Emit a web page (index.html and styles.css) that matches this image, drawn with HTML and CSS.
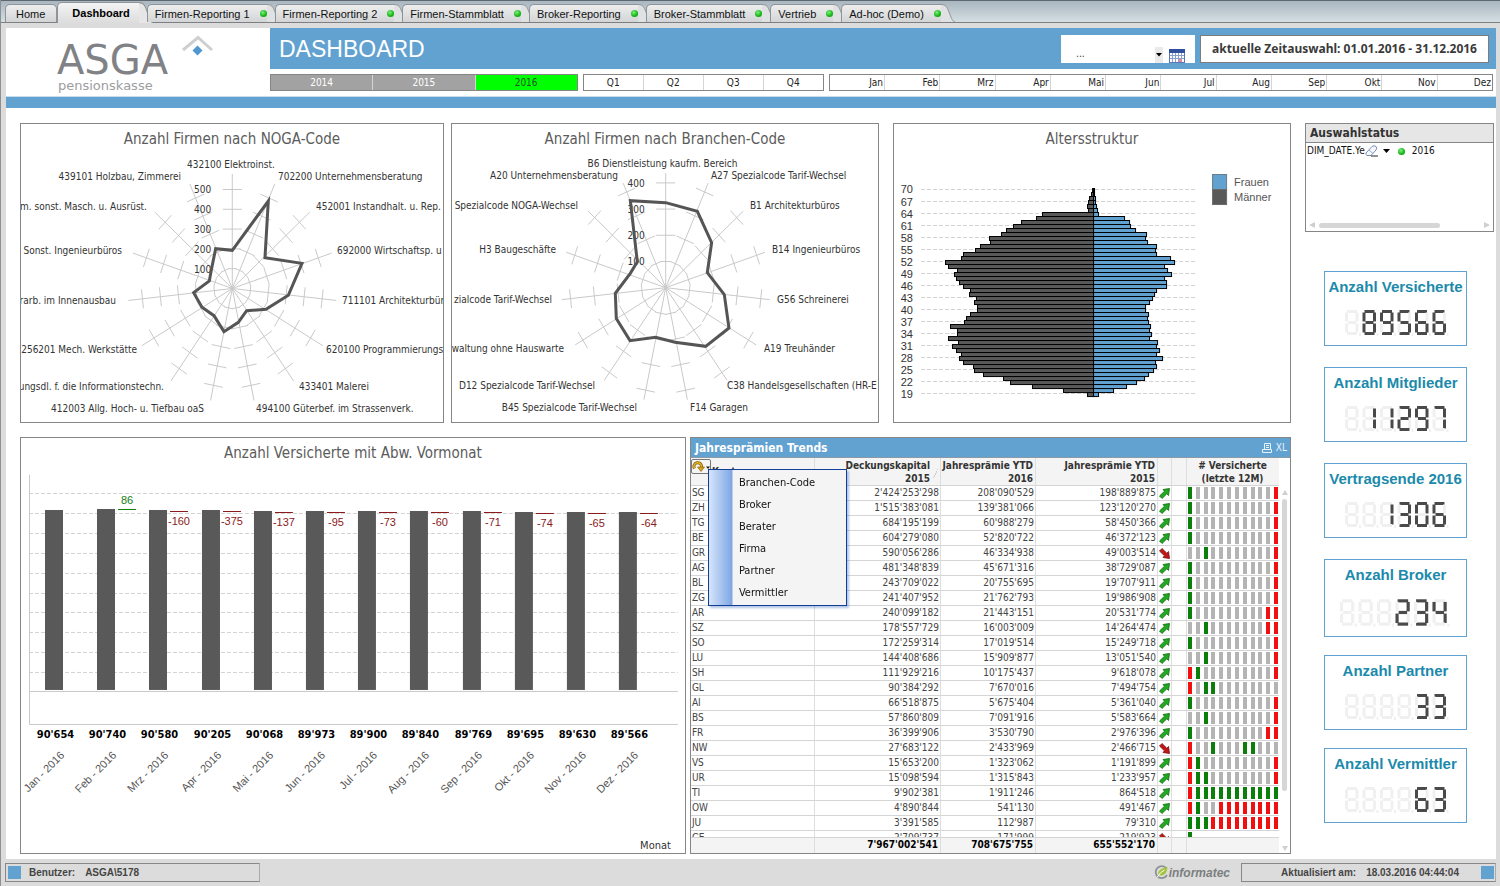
FILE: index.html
```html
<!DOCTYPE html>
<html lang="de">
<head>
<meta charset="utf-8">
<title>Dashboard</title>
<link rel="stylesheet" href="styles.css">
</head>
<body>
<nav class="tabs" id="tabs" aria-label="Register"></nav>

<main class="sheet">
  <header class="head">
    <div class="logo">
      <svg class="logo-svg" viewBox="0 0 264 69" role="img" aria-label="ASGA pensionskasse">
        <text class="logo-name" x="51" y="46">ASGA</text>
        <text class="logo-sub" x="52" y="62">pensionskasse</text>
        <path d="M177 22 192 9.500 206 22" fill="none" stroke="#cfcfcf" stroke-width="3"/>
        <path d="M191.500 17.500 196.500 22.500 191.500 27.500 186.500 22.500z" fill="#4f97cd"/>
      </svg>
    </div>
    <div class="head-main">
      <div class="band">
        <h1>DASHBOARD</h1>
        <div class="picker">
          <input class="picker-input" type="text" value="..." aria-label="Datum">
          <button class="picker-drop" type="button" aria-label="Auswahl öffnen"><svg width="6" height="4"><path d="M0 0h6L3 3.500z"/></svg></button>
          <button class="picker-cal" type="button" aria-label="Kalender">
            <svg width="16" height="14" viewBox="0 0 16 14"><rect x=".5" y=".5" width="15" height="13" fill="#fff" stroke="#5a76b4"/><rect width="16" height="4" fill="#2f4f9f"/><path d="M1 6.500h14M1 9.500h14M3.500 4v9M6.500 4v9M9.500 4v9M12.500 4v9" stroke="#8a9fce"/><path d="M10 10h3v3h-3z" fill="#e58a96"/></svg>
          </button>
        </div>
        <div class="range">aktuelle Zeitauswahl: 01.01.2016 - 31.12.2016</div>
      </div>
      <div class="selectors" id="selectors"></div>
    </div>
  </header>
  <div class="stripe"></div>

  <div class="content">
    <div class="charts">
      <div class="row">
        <section class="panel radar-noga"><h2>Anzahl Firmen nach NOGA-Code</h2><svg id="radar1" viewBox="21 154 422 268"></svg></section>
        <section class="panel radar-branche"><h2>Anzahl Firmen nach Branchen-Code</h2><svg id="radar2" viewBox="452 154 426 268"></svg></section>
        <section class="panel pyramid"><h2>Altersstruktur</h2><svg id="pyramid" viewBox="894 154 396 268"></svg></section>
      </div>
      <div class="row row-low">
        <section class="panel bars"><h2>Anzahl Versicherte mit Abw. Vormonat</h2><svg id="bars" viewBox="21 468 664 385"></svg></section>
        <section class="panel trends">
          <header class="trends-title">
            <h2>Jahresprämien Trends</h2>
            <button type="button" class="tool" aria-label="Drucken"><svg width="10" height="10" viewBox="0 0 10 10" fill="none" stroke="#e6f1fa"><path d="M2.500 6V.5h6V6M.5 6.500h9v3h-9zM4 2.500h3M4 4.500h3"/></svg></button>
            <button type="button" class="tool">XL</button>
          </header>
          <div class="trends-body">
            <div class="table-wrap">
              <table>
                <colgroup><col><col class="c-cap"><col class="c-p16"><col class="c-p15"><col class="c-arrow"><col class="c-gap"><col class="c-spark"></colgroup>
                <thead><tr><th class="first">Kanton</th><th class="sorted">Deckungskapital<br>2015</th><th>Jahresprämie YTD<br>2016</th><th>Jahresprämie YTD<br>2015</th><th></th><th></th><th class="mid"># Versicherte<br>(letzte 12M)</th></tr></thead>
                <tbody id="rows"></tbody>
                <tfoot><tr><td></td><td>7'967'002'541</td><td>708'675'755</td><td>655'552'170</td><td></td><td></td><td></td></tr></tfoot>
              </table>
            </div>
            <div class="vscroll"><svg width="6" height="5"><path d="M0 5h6L3 0z"/></svg><span class="vthumb"></span><svg width="6" height="5"><path d="M0 0h6L3 5z"/></svg></div>
          </div>
          <button type="button" class="cycle" aria-label="Dimension wechseln"><svg width="18" height="12" viewBox="0 0 18 12"><path d="M2.500 7.500A3.800 3.800 0 1 1 9.500 6" fill="none" stroke="#8a6508" stroke-width="3"/><path d="M2.500 7.500A3.800 3.800 0 1 1 9.500 6" fill="none" stroke="#e3b32a" stroke-width="1.500"/><path d="M5.500 6h7L9 10.500z" fill="#d9a520" stroke="#8a6508" stroke-width=".7"/><path d="M14 5.500h4L16 8z" fill="#222"/></svg></button>
          <ul class="menu">
            <li><button type="button">Branchen-Code</button></li>
            <li><button type="button">Broker</button></li>
            <li><button type="button">Berater</button></li>
            <li><button type="button">Firma</button></li>
            <li><button type="button">Partner</button></li>
            <li><button type="button">Vermittler</button></li>
          </ul>
        </section>
      </div>
    </div>

    <aside class="side">
      <section class="status">
        <h2>Auswahlstatus</h2>
        <div class="status-line">
          <span>DIM_DATE.Ye</span>
          <svg width="13" height="12" viewBox="0 0 13 12"><path d="M1 8 7 1.500Q9 0 11 1.500 12.500 3 11 5L6 10.500H2Q0 9.500 1 8z" fill="#f4f7ff" stroke="#7c8cb4"/><path d="M4 5l4 3.500" stroke="#9aa8cc"/><path d="M6 11h7" stroke="#222"/></svg>
          <svg class="caret" width="7" height="4"><path d="M0 0h7L3.500 4z"/></svg>
          <i class="dot"></i>
          <span>2016</span>
        </div>
        <div class="hscroll"><svg width="6" height="6"><path d="M6 0v6L0 3z"/></svg><span class="hthumb"></span><svg width="6" height="6"><path d="M0 0v6L6 3z"/></svg></div>
      </section>
      <div class="kpis" id="kpis"></div>
    </aside>
  </div>
</main>

<footer class="foot">
  <div class="foot-box"><i class="sq"></i><span>Benutzer:</span><span>ASGA\5178</span></div>
  <div class="vendor">
    <svg width="15" height="15" viewBox="0 0 15 15" fill="none"><path d="M12.500 3.500A6 6 0 1 0 13 10" stroke="#8a9492" stroke-width="1.800"/><path d="M4 9.500C4 5 8 3 13.500 2 13 7 11 11 6 10.500z" fill="#a5c23c"/><path d="M3 12.500Q6 7 10.500 5" stroke="#fff"/></svg>
    <span>informatec</span>
  </div>
  <div class="foot-box right"><span>Aktualisiert am:</span><span>18.03.2016 04:44:04</span><i class="sq"></i></div>
</footer>
<script src="app.js"></script>
</body>
</html>
```
FILE: styles.css
```css
* { box-sizing: border-box; }
body {
  margin: 0;
  min-height: 100vh;
  display: flex;
  flex-direction: column;
  background: #dcdcdc;
  border-left: 1px solid #8b9094;
  color: #333;
  font: 10px/12px "DejaVu Sans Condensed", "DejaVu Sans", sans-serif;
}
h1, h2, ul { margin: 0; padding: 0; }
button { font: inherit; color: inherit; border: 0; background: none; padding: 0; }
svg { display: block; }

/* register tabs */
.tabs {
  display: flex;
  align-items: flex-end;
  height: 23px;
  padding-left: 4px;
  border-top: 1px solid #5d6871;
  border-bottom: 1px solid #7d7f82;
  background: linear-gradient(#aab6c0, #d4dfe3);
}
.tab {
  display: flex;
  align-items: center;
  height: 18px;
  padding-left: 7px;
  border: 1px solid #8f9498;
  border-width: 1px 0 0 1px;
  border-radius: 5px 0 0 0;
  background: linear-gradient(#eee, #d2d4d6);
  color: #111;
  font: 11px/16px "Liberation Sans", Arial, sans-serif;
  text-decoration: none;
  white-space: nowrap;
}
.tab .dot { margin-left: 10px; }
.tab-cap { margin-right: -7px; flex: none; }
.tab.home { padding: 0 11px 0 10px; border-right-width: 1px; border-radius: 5px 5px 0 0; }
.tab.active {
  height: 21px;
  margin-bottom: -1px;
  padding: 0 9px 0 14px;
  background: linear-gradient(#f4f4f4, #dcdcdc);
  color: #000;
  font-weight: bold;
}
.tab.active + .tab-cap { margin-bottom: -1px; }
.dot {
  width: 7px;
  height: 7px;
  border-radius: 50%;
  background: radial-gradient(circle at 40% 35%, #7df07d, #13b313 60%, #0c8a0c);
}

/* sheet and header */
.sheet { flex: 1; margin: 5px 4px 0 5px; background: #fff; }
.head { display: flex; height: 68px; }
.logo { flex: none; width: 264px; }
.logo-svg { width: 264px; height: 69px; }
.logo-name { font: 40px "DejaVu Sans", sans-serif; }
.logo-sub { font: 13px "DejaVu Sans", sans-serif; }
svg .logo-name { fill: #808285; }
svg .logo-sub { fill: #9b9da0; }
.head-main { flex: 1; min-width: 0; }
.band {
  display: flex;
  align-items: center;
  gap: 5px;
  height: 41px;
  padding: 0 7px 0 9px;
  background: #62a2d1;
}
.band h1 { flex: 1; color: #fff; font: 23px/28px "Liberation Sans", Arial, sans-serif; }
.picker {
  display: flex;
  align-items: flex-end;
  gap: 6px;
  width: 134px;
  height: 28px;
  padding-right: 10px;
  background: #fff;
}
.picker-input {
  flex: 1;
  width: 60px;
  min-width: 0;
  height: 18px;
  padding: 0 0 0 15px;
  border: 0;
  background: none;
  color: #333;
  font: 10px/18px "DejaVu Sans Condensed", sans-serif;
}
.picker-drop { width: 8px; height: 16px; display: flex; align-items: center; justify-content: center; background: #eaeaea; }
.picker-drop, .picker-cal { flex: none; }
.range {
  height: 28px;
  padding: 0 11px;
  border: 1px solid #7d7d7d;
  background: #fff;
  color: #3a3a3a;
  font: bold 12px/26px "Noto Sans", sans-serif;
  white-space: nowrap;
}
.selectors { display: flex; gap: 5px; padding: 5px 3px 0 0; }
.sel { display: flex; flex: 240 1 0; height: 17px; border: 1px solid #858585; }
.sel button { flex: 1 1 0; min-width: 0; border-left: 1px solid #d5d5d5; color: #222; line-height: 15px; }
.sel button:first-child { border-left: 0; }
.sel.years { flex-grow: 307; }
.sel.years button { background: #a2a2a2; color: #fff; }
.sel.years button.on { background: #0f0; color: #24522a; }
.sel.months { flex-grow: 665; }
.sel.months button { text-align: right; padding-right: 1px; }
.stripe { height: 12px; border-top: 1px solid #c8ddec; background: #62a2d1; }

/* panels */
.content { display: flex; gap: 14px; padding: 15px 2px 5px 14px; }
.charts { flex: 1; min-width: 0; }
.row { display: flex; gap: 7px; }
.row-low { gap: 4px; margin-top: 14px; }
.panel { flex: 1 1 0; min-width: 0; border: 1px solid #868686; background: #fff; overflow: hidden; }
.panel > svg { width: 100%; height: auto; }
.panel > h2 { color: #5c5c5c; font-size: 15px; line-height: 30px; font-weight: normal; text-align: center; }
.radar-noga { flex-grow: 424; }
.radar-branche { flex-grow: 428; }
.pyramid { flex-grow: 398; margin-left: 7px; }
.bars { flex-grow: 666; }
.grid { stroke: #c9c9c9; fill: none; }
.dash { stroke: #d3d3d3; stroke-dasharray: 4 2; }
.shape { stroke: #555; stroke-width: 3; fill: none; }
svg text { fill: #333; }
.start { text-anchor: start; }
.middle { text-anchor: middle; }
.end { text-anchor: end; }
.lbl { font-size: 10px; }
.age, .legend { font-family: "Liberation Sans", Arial, sans-serif; font-size: 11px; }
svg .legend, svg .month { fill: #555; }
.month, .delta { font: 11px "Liberation Sans", Arial, sans-serif; }
svg .up { fill: #148014; }
svg .down { fill: #8b1a1a; }
.sum { font-size: 11px; font-weight: bold; }
svg .sum { fill: #000; }
.axis-name { font-size: 11px; }

/* trends table */
.trends { position: relative; flex-grow: 601; display: flex; flex-direction: column; overflow: visible; }
.trends-title {
  display: flex;
  align-items: center;
  gap: 4px;
  height: 20px;
  padding: 0 3px 0 4px;
  background: #62a2d1;
  border-bottom: 1px solid #8a9aa6;
  color: #e6f1fa;
}
.trends-title h2 { flex: 1; color: #fff; font-size: 12px; line-height: 18px; }
.trends-body { flex: 1; display: flex; min-height: 0; }
.table-wrap { flex: 1; min-width: 0; overflow: hidden; contain: size; }
table { width: 100%; table-layout: fixed; border-collapse: separate; border-spacing: 0; }
.c-cap { width: 126px; }
.c-p16 { width: 95px; }
.c-p15 { width: 122px; }
.c-arrow { width: 14px; }
.c-gap { width: 15px; }
.c-spark { width: 92px; }
th, td { padding: 0 1px; text-align: right; white-space: nowrap; border-right: 1px solid #dedede; border-bottom: 1px solid #d5d5d5; color: #444; }
th { height: 28px; padding-right: 2px; background: #f4f4f4; font-size: 10px; line-height: 13px; color: #333; }
th:last-child, td:last-child { border-right: 0; }
th.first { text-align: left; padding-left: 21px; }
th.mid { text-align: center; }
th.sorted {
  padding-right: 10px;
  background: linear-gradient(115deg, transparent 46%, #cfcfcf 46% 56%, transparent 56%) right 2px top 11px / 5px 9px no-repeat #f4f4f4;
}
td { height: 15px; line-height: 14px; }
td:first-child { text-align: left; }
tfoot td {
  position: sticky;
  bottom: 0;
  height: 16px;
  padding-right: 2px;
  background: #f4f4f4;
  border-top: 1px solid #d5d5d5;
  border-bottom: 0;
  color: #000;
  font-weight: bold;
}
.spark { display: flex; justify-content: space-between; height: 12px; }
.spark i { width: 4px; background: #b4b4b4; }
.spark .g { background: #0a7f0a; }
.spark .r { background: #f01010; }
.vscroll { display: flex; flex-direction: column; align-items: center; width: 11px; padding: 32px 0 2px; fill: #cfcfcf; }
.vthumb { width: 5px; height: 292px; margin: 4px 0 auto; border-radius: 3px; background: #d6d6d6; }
.cycle {
  position: absolute;
  left: 0;
  top: 21px;
  width: 20px;
  height: 15px;
  border: 1px solid #777;
  border-radius: 2px;
  background: #f5f5f5;
}
.menu {
  position: absolute;
  left: 17px;
  top: 31px;
  width: 139px;
  padding: 2px 0 1px 24px;
  list-style: none;
  border: 1px solid #103f95;
  background: linear-gradient(to right, #d6e5fa, #7fa6e4 23px, #f4f4f4 24px);
  box-shadow: 2px 2px 2px rgba(60, 110, 190, .4);
}
.menu button { display: block; width: 100%; padding-left: 6px; text-align: left; color: #111; font-size: 11px; line-height: 22px; }

/* side column */
.side { flex: none; width: 189px; }
.status { border: 1px solid #868686; height: 109px; display: flex; flex-direction: column; }
.status h2 { padding-left: 4px; background: #e6e6e6; border-bottom: 1px solid #868686; color: #333; font-size: 12px; line-height: 18px; }
.status-line { display: flex; align-items: center; height: 16px; padding-left: 1px; color: #111; }
.status-line .caret { margin: 0 8px 0 5px; }
.status-line .dot { margin-right: 7px; }
.hscroll { display: flex; align-items: center; margin-top: auto; padding: 3px; fill: #cfcfcf; }
.hthumb { width: 121px; height: 5px; margin: 0 auto 0 4px; border-radius: 3px; background: #d6d6d6; }
.kpis { margin: 39px 27px 0 19px; }
.kpi { height: 75px; margin-bottom: 21px; border: 1px solid #62a2d1; }
.kpi h3 { margin: 0; color: #1b8aab; font: bold 15px/30px "Liberation Sans", Arial, sans-serif; text-align: center; white-space: nowrap; }
.kpi svg { margin: 8px 0 0 20px; }
.kpi.large { height: 78px; }
.kpi.large svg { margin: 9px 0 0 15px; }
.kpi.tight { margin-bottom: 18px; }
.off { stroke: #f0f0f0; }
.lit { stroke: #4a4a4a; }
.segment { stroke-width: 3; stroke-linecap: butt; }

/* status bar */
.foot { display: flex; align-items: center; gap: 11px; height: 27px; padding: 0 4px; font: bold 10px/14px "Liberation Sans", Arial, sans-serif; color: #444; }
.foot-box { display: flex; align-items: center; gap: 8px; width: 255px; height: 19px; padding: 0 2px; border: 1px solid #888; border-right-color: #aaa; white-space: nowrap; }
.foot-box span + span { margin-left: 2px; }
.foot-box.right { justify-content: flex-end; padding-right: 1px; }
.foot-box.right .sq { margin-left: 14px; }
.sq { width: 13px; height: 13px; background: #62a2d1; }
.vendor { display: flex; align-items: center; margin-left: auto; color: #7b7f80; font: italic bold 12px/14px "Liberation Sans", Arial, sans-serif; }
```
FILE: app.js
```js
const $ = id => document.getElementById(id);
const esc = s => s.replace(/&/g, '&amp;');
const txt = (x, y, s, cls) => `<text x="${x}" y="${y}" class="${cls}">${esc(s)}</text>`;

/* tabs */
const cap = (h, fill) => `<svg class="tab-cap" width="15" height="${h}" viewBox="0 0 15 18" preserveAspectRatio="none"><path d="M0 .5C5 .5 6 3 8 8 10 13 11 17 14 18H0z" fill="${fill}"/><path d="M0 .5C5 .5 6 3 8 8 10 13 11 17 14 18" fill="none" stroke="#8f9498"/></svg>`;
$('tabs').innerHTML = '<a href="#" class="tab home">Home</a><a href="#" class="tab active">Dashboard</a>' + cap(21, '#e6e6e6') +
  ['Firmen-Reporting 1', 'Firmen-Reporting 2', 'Firmen-Stammblatt', 'Broker-Reporting', 'Broker-Stammblatt', 'Vertrieb', 'Ad-hoc (Demo)']
    .map(t => `<a href="#" class="tab">${t}<i class="dot"></i></a>` + cap(18, '#dfe1e2')).join('');

/* period selectors */
$('selectors').innerHTML = [
  ['years', ['2014', '2015', '2016']],
  ['quarters', ['Q1', 'Q2', 'Q3', 'Q4']],
  ['months', ['Jan', 'Feb', 'Mrz', 'Apr', 'Mai', 'Jun', 'Jul', 'Aug', 'Sep', 'Okt', 'Nov', 'Dez']]
].map(([c, l]) => `<div class="sel ${c}">${l.map(v => `<button type="button"${v === '2016' ? ' class="on"' : ''}>${v}</button>`).join('')}</div>`).join('');

/* radar charts */
function radar(el, cx, cy, unit, rings, pts, labels) {
  const n = 15, k = 104.5 / 114.5;
  let s = '';
  for (let i = 0; i < n; i++) {
    const a = i * 2 * Math.PI / n, sx = Math.sin(a) * k, sy = -Math.cos(a);
    s += `<line class="grid" x1="${cx}" y1="${cy}" x2="${cx + sx * 114.5}" y2="${cy + sy * 114.5}"/>`;
    for (let r = 1; r <= rings; r++) {
      const R = unit * r, h = Math.min(9.5, R * Math.tan(Math.PI / n));
      const px = cx + sx * R, py = cy + sy * R, tx = Math.cos(a) * h, ty = Math.sin(a) * h;
      s += `<line class="grid" x1="${px - tx}" y1="${py - ty}" x2="${px + tx}" y2="${py + ty}"/>`;
    }
  }
  for (let r = 1; r <= rings; r++) s += txt(cx - 21, cy - unit * r + 4, r * 100 + '', 'lbl end');
  s += `<polygon class="shape" points="${pts.map(p => p.join()).join(' ')}"/>`;
  s += labels.map(([x, y, t, c]) => txt(x, y + 4, t, 'lbl ' + c)).join('');
  $(el).innerHTML = s;
}
const at = (ox, oy, list) => list.map(([x, y]) => [ox + x / 3, oy + y / 3]);
radar('radar1', 232.3, 288.5, 19.8, 5, at(10, 115, [[667,406],[775,258],[765,428],[876,445],[835,541],[768,583],[710,587],[685,622],[642,650],[612,602],[576,577],[551,533],[598,498],[604,465],[617,401]]), [
  [231, 164, '432100 Elektroinst.', 'middle'], [278, 176, '702200 Unternehmensberatung', 'start'],
  [316, 206, '452001 Instandhalt. u. Rep.', 'start'], [337, 250, '692000 Wirtschaftsp. u', 'start'],
  [342, 300, '711101 Architekturbür', 'start'], [326, 349, '620100 Programmierungs', 'start'],
  [299, 386, '433401 Malerei', 'start'], [256, 408, '494100 Güterbef. im Strassenverk.', 'start'],
  [204, 408, '412003 Allg. Hoch- u. Tiefbau oaS', 'end'], [164, 386, 'ungsdl. f. die Informationstechn.', 'end'],
  [137, 349, '256201 Mech. Werkstätte', 'end'], [116, 300, 'rarb. im Innenausbau', 'end'],
  [122, 250, 'Sonst. Ingenieurbüros', 'end'], [147, 206, 'm. sonst. Masch. u. Ausrüst.', 'end'],
  [181, 176, '439101 Holzbau, Zimmerei', 'end']]);
radar('radar2', 665.7, 287.7, 26.2, 4, at(445, 115, [[662,263],[757,289],[800,383],[787,473],[838,539],[852,639],[782,694],[690,682],[632,667],[555,677],[514,611],[511,535],[556,475],[577,440],[556,257]]), [
  [662.5, 163, 'B6 Dienstleistung kaufm. Bereich', 'middle'], [711, 175, 'A27 Spezialcode Tarif-Wechsel', 'start'],
  [750, 205, 'B1 Architekturbüros', 'start'], [772, 249, 'B14 Ingenieurbüros', 'start'],
  [777, 299, 'G56 Schreinerei', 'start'], [764, 348, 'A19 Treuhänder', 'start'],
  [727, 385, 'C38 Handelsgesellschaften (HR-E', 'start'], [690, 407, 'F14 Garagen', 'start'],
  [637, 407, 'B45 Spezialcode Tarif-Wechsel', 'end'], [595, 385, 'D12 Spezialcode Tarif-Wechsel', 'end'],
  [564, 348, 'waltung ohne Hauswarte', 'end'], [552, 299, 'zialcode Tarif-Wechsel', 'end'],
  [556, 249, 'H3 Baugeschäfte', 'end'], [578, 205, 'Spezialcode NOGA-Wechsel', 'end'],
  [618, 175, 'A20 Unternehmensberatung', 'end']]);

/* age pyramid, ages 70 down to 19 */
const men = [3,6,12,15,18,16,153,170,217,240,261,277,312,309,340,354,390,396,445,434,409,417,411,403,390,369,372,351,357,348,348,369,381,387,429,408,408,435,405,423,411,396,402,390,360,357,330,270,249,183,90,18];
const women = [2,4,5,6,9,12,15,93,108,111,127,160,155,163,190,185,189,232,243,214,223,235,213,218,218,190,183,177,169,156,156,165,163,165,171,169,174,169,193,190,198,190,207,186,188,180,165,153,129,99,59,15];
let p = '';
for (let i = 0; i < 52; i += 3) {
  const y = 189.5 + i * 4;
  p += `<line class="dash" x1="921" x2="1196" y1="${y}" y2="${y}"/>` + txt(913, y + 4, 70 - i + '', 'age end');
}
men.forEach((m, i) => {
  const y = 188.5 + i * 4, l = Math.round(m / 3), r = Math.round(women[i] / 3);
  p += `<rect x="${1093.5 - l}" y="${y}" width="${l}" height="4" fill="#595959" stroke="#000"/><rect x="1093.5" y="${y}" width="${r}" height="4" fill="#62a2d1" stroke="#000"/>`;
});
p += '<rect x="1212.500" y="174.500" width="14" height="15" fill="#62a2d1" stroke="#6b7c88"/><rect x="1212.500" y="189.500" width="14" height="15" fill="#595959" stroke="#6b6b6b"/>' + txt(1234, 186, 'Frauen', 'legend') + txt(1234, 201, 'Männer', 'legend');
$('pyramid').innerHTML = p;

/* monthly bars with change against previous month */
const months = [['Jan', "90'654", null, 510], ['Feb', "90'740", '86', 509], ['Mrz', "90'580", '-160', 510], ['Apr', "90'205", '-375', 510], ['Mai', "90'068", '-137', 511], ['Jun', "89'973", '-95', 511], ['Jul', "89'900", '-73', 511], ['Aug', "89'840", '-60', 511], ['Sep', "89'769", '-71', 511], ['Okt', "89'695", '-74', 512], ['Nov', "89'630", '-65', 512], ['Dez', "89'566", '-64', 512]];
let b = '';
for (let i = 0; i < 10; i++) { const y = Math.round(493 + i * 19.9) + .5; b += `<line class="dash" x1="29" x2="678" y1="${y}" y2="${y}"/>`; }
b += '<path class="grid" d="M29.500 475V724.500H678M29 691.500H678"/>';
months.forEach(([m, v, d, top], i) => {
  const x = Math.round(45 + i * 52.2);
  b += `<rect x="${x}" y="${top}" width="18" height="${690 - top}" fill="#595959"/>`;
  if (d) {
    const up = d[0] !== '-';
    b += `<rect x="${x + 21}" y="${top + (up ? 0 : 1)}" width="18" height="1" class="${up ? 'up' : 'down'}"/>` + txt(x + 30, up ? 504 : top + 15, d, 'delta middle ' + (up ? 'up' : 'down'));
  }
  b += txt(x + 10.5, 738, v, 'sum middle');
  b += `<g transform="translate(${x + 20} 756) rotate(-45)">` + txt(0, 0, m + ' - 2016', 'month end') + '</g>';
});
b += txt(671, 849, 'Monat', 'axis-name end');
$('bars').innerHTML = b;

/* trends table: g = rise, r = fall, dash = unchanged */
const B = 'g----------r';
const rows = [
  ['SG', "2'424'253'298", "208'090'529", "198'889'875", 1, B], ['ZH', "1'515'383'081", "139'381'066", "123'120'270", 1, B],
  ['TG', "684'195'199", "60'988'279", "58'450'366", 1, B], ['BE', "604'279'080", "52'820'722", "46'372'123", 1, B],
  ['GR', "590'056'286", "46'334'938", "49'003'514", 0, '--g--------r'], ['AG', "481'348'839", "45'671'316", "38'729'087", 1, B],
  ['BL', "243'709'022", "20'755'695", "19'707'911", 1, B], ['ZG', "241'407'952", "21'762'793", "19'986'908", 1, B],
  ['AR', "240'099'182", "21'443'151", "20'531'774", 1, 'g---------rr'], ['SZ', "178'557'729", "16'003'009", "14'264'474", 1, '--g-------rr'],
  ['SO', "172'259'314", "17'019'514", "15'249'718", 1, B], ['LU', "144'408'686", "15'909'877", "13'051'540", 1, '--g--------r'],
  ['SH', "111'929'216", "10'175'437", "9'618'078", 1, 'rg---------r'], ['GL', "90'384'292", "7'670'016", "7'494'754", 1, 'r-gg--------'],
  ['AI', "66'518'875", "5'675'404", "5'361'040", 1, B], ['BS', "57'860'809", "7'091'916", "5'583'664", 1, '--g--------r'],
  ['FR', "36'399'906", "3'530'790", "2'976'396", 1, 'g---------rr'], ['NW', "27'683'122", "2'433'969", "2'466'715", 0, 'r--g---gg---'],
  ['VS', "15'653'200", "1'323'062", "1'191'899", 1, 'rg---------r'], ['UR', "15'098'594", "1'315'843", "1'233'957", 1, 'rgg--------r'],
  ['TI', "9'902'381", "1'911'246", "864'518", 1, 'rggggggggggg'], ['OW', "4'890'844", "541'130", "491'467", 1, 'rg--rrrrrrrr'],
  ['JU', "3'391'585", "112'987", "79'310", 1, 'gggrrrrrrrrr'], ['GE', "2'709'737", "171'999", "219'923", 0, 'g           ']
];
const arrow = up => `<svg width="11" height="11" viewBox="0 0 11 11"><g ${up ? '' : 'transform="matrix(1 0 0 -1 0 11)"'}><path d="M4 1.500 10.500 .5 9.500 7.500 7.800 5.800 3 10.500.5 8 5.500 3.200z" fill="${up ? '#22a822' : '#c01818'}" stroke="${up ? '#0b6a0b' : '#7a0c0c'}" stroke-width=".8"/></g></svg>`;
$('rows').innerHTML = rows.map(r => `<tr><td>${r[0]}</td><td>${r[1]}</td><td>${r[2]}</td><td>${r[3]}</td><td>${arrow(r[4])}</td><td></td><td><div class="spark">${[...r[5]].map(c => `<i${c === '-' ? '' : c === ' ' ? ' hidden' : ` class="${c}"`}></i>`).join('')}</div></td></tr>`).join('');

/* seven-segment counters: a top, b/c right, d bottom, e/f left, g middle */
const seg = { 0: 'abcdef', 1: 'bc', 2: 'abged', 3: 'abgcd', 4: 'fgbc', 5: 'afgcd', 6: 'afgedc', 7: 'abc', 8: 'abcdefg', 9: 'abcdfg', ' ': '' };
const lines = { a: 'M2 1.500H12', b: 'M12 2.500V11.500', c: 'M12 13.500V22.500', d: 'M2 23.500H12', e: 'M1.500 13.500V22.500', f: 'M1.500 2.500V11.500', g: 'M3 12.500H11' };
const counter = (v, scale) => `<svg width="${Math.round(106 * scale)}" height="${Math.round(26 * scale)}" viewBox="0 0 106 26" role="img" aria-label="${v}">` + [...v.padStart(6)].map((d, i) => `<g class="segment" fill="none" transform="translate(${i * 17.5})">${Object.keys(lines).map(k => `<path d="${lines[k]}" class="${seg[d].includes(k) ? 'lit' : 'off'}"/>`).join('')}<path class="off" d="M14 24.500h2"/></g>`).join('') + '</svg>';
$('kpis').innerHTML = [['Anzahl Versicherte', '89566', ''], ['Anzahl Mitglieder', '11297', ''], ['Vertragsende 2016', '1306', ''], ['Anzahl Broker', '234', 'large tight'], ['Anzahl Partner', '33', 'tight'], ['Anzahl Vermittler', '63', '']]
  .map(([t, v, c]) => `<section class="kpi ${c}"><h3>${t}</h3>${counter(v, c.startsWith('large') ? 1.06 : 1)}</section>`).join('');
```
